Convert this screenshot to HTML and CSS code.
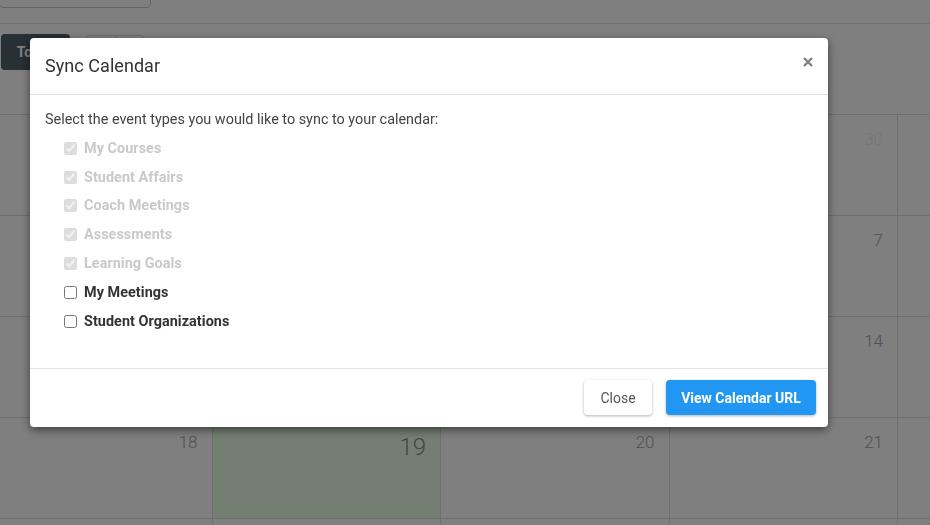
FILE: index.html
```html
<!DOCTYPE html>
<html lang="en">
<head>
<meta charset="utf-8">
<title>Calendar</title>
<link rel="stylesheet" href="styles.css">
</head>
<body>
<div class="page">
  <div class="topbar"><div class="search"></div></div>
  <div class="toolbar">
    <button class="today-btn">Today</button>
    <div class="view-group"><span class="seg"></span><span class="seg"></span></div>
  </div>
  <div class="grid">
    <div class="cell"><span class="num other">27</span></div>
    <div class="cell"><span class="num other">28</span></div>
    <div class="cell"><span class="num other">29</span></div>
    <div class="cell"><span class="num other">30</span></div>
    <div class="cell"></div>
    <div class="cell"><span class="num">4</span></div>
    <div class="cell"><span class="num">5</span></div>
    <div class="cell"><span class="num">6</span></div>
    <div class="cell"><span class="num">7</span></div>
    <div class="cell"></div>
    <div class="cell"><span class="num">11</span></div>
    <div class="cell"><span class="num">12</span></div>
    <div class="cell"><span class="num">13</span></div>
    <div class="cell"><span class="num">14</span></div>
    <div class="cell"></div>
    <div class="cell"><span class="num">18</span></div>
    <div class="cell today"><span class="num big">19</span></div>
    <div class="cell"><span class="num">20</span></div>
    <div class="cell"><span class="num">21</span></div>
    <div class="cell"></div>
    <div class="cell"></div>
    <div class="cell"></div>
    <div class="cell"></div>
    <div class="cell"></div>
    <div class="cell"></div>
  </div>
</div>

<div class="backdrop"></div>

<div class="modal" role="dialog" aria-labelledby="sync-title">
  <div class="modal-header">
    <h4 class="modal-title" id="sync-title">Sync Calendar</h4>
    <button class="close" aria-label="Close">
      <svg width="10" height="10" viewBox="0 0 10 10"><path d="M1 1 L9 9 M9 1 L1 9" stroke="#828282" stroke-width="2.4" stroke-linecap="butt"/></svg>
    </button>
  </div>
  <div class="modal-body">
    <p class="intro">Select the event types you would like to sync to your calendar:</p>
    <ul class="options">
      <li><label class="opt disabled"><input type="checkbox" checked disabled><span>My Courses</span></label></li>
      <li><label class="opt disabled"><input type="checkbox" checked disabled><span>Student Affairs</span></label></li>
      <li><label class="opt disabled"><input type="checkbox" checked disabled><span>Coach Meetings</span></label></li>
      <li><label class="opt disabled"><input type="checkbox" checked disabled><span>Assessments</span></label></li>
      <li><label class="opt disabled"><input type="checkbox" checked disabled><span>Learning Goals</span></label></li>
      <li><label class="opt"><input type="checkbox"><span>My Meetings</span></label></li>
      <li><label class="opt"><input type="checkbox"><span>Student Organizations</span></label></li>
    </ul>
  </div>
  <div class="modal-footer">
    <button class="btn btn-default">Close</button>
    <button class="btn btn-primary">View Calendar URL</button>
  </div>
</div>
</body>
</html>
```
FILE: styles.css
```css
* { box-sizing: border-box; }
html, body {
  margin: 0;
  width: 930px;
  height: 525px;
  overflow: hidden;
  background: #fff;
  font-family: Roboto, "Liberation Sans", sans-serif;
}
.page { width: 930px; height: 525px; overflow: hidden; }

.topbar {
  height: 24px;
  border-bottom: 1px solid #e0e0e0;
  display: flex;
  align-items: flex-end;
  padding-bottom: 15px;
}
.search {
  flex: none;
  width: 152px;
  height: 30px;
  margin-left: -1px;
  border: 1px solid #c8c8c8;
  border-radius: 4px;
}

.toolbar {
  height: 90px;
  display: flex;
  align-items: flex-start;
  padding-top: 10px;
}
.today-btn {
  margin-left: 1px;
  width: 69px;
  height: 36px;
  border: 0;
  border-radius: 4px;
  background: #4c606a;
  color: #fff;
  font-family: inherit;
  font-weight: 700;
  font-size: 14px;
}
.view-group {
  margin-left: 16px;
  margin-top: 1px;
  width: 59px;
  height: 34px;
  border: 1px solid #dcdcdc;
  border-radius: 4px;
  display: flex;
}
.view-group .seg { flex: 1; }
.view-group .seg + .seg { border-left: 1px solid #dcdcdc; }

.grid {
  margin-left: -16px;
  display: grid;
  grid-template-columns: repeat(5, 228.5px);
  width: 1142.5px;
}
.cell {
  height: 101px;
  border-top: 1px solid #dddddd;
  border-right: 1px solid #dddddd;
  padding: 14px 14px 0 0;
  text-align: right;
}
.cell.today { background: #e7ffe3; }
.num {
  font-size: 17px;
  line-height: 20px;
  font-weight: 300;
  color: #a2a2a2;
}
.num.other { color: #ececec; }
.num.big {
  font-size: 24px;
  line-height: 30px;
  color: #829480;
}

.backdrop {
  position: fixed;
  inset: 0;
  background: rgba(0, 0, 0, 0.5);
}

.modal {
  position: absolute;
  top: 38px;
  left: 30px;
  width: 798px;
  background: #fff;
  border-radius: 4px;
  box-shadow: 0 3px 9px rgba(0, 0, 0, 0.5);
  color: #333;
}
.modal-header {
  height: 57px;
  padding: 0 15px;
  border-bottom: 1px solid #e2e2e2;
  display: flex;
  align-items: center;
  justify-content: space-between;
}
.modal-title {
  margin: 0;
  font-size: 18px;
  font-weight: 400;
  line-height: 26px;
  color: #333;
  letter-spacing: 0.05px;
}
.close {
  border: 0;
  background: none;
  padding: 0;
  width: 10px;
  height: 10px;
  margin-right: 0;
  margin-top: -8px;
  display: flex;
}

.modal-body {
  padding: 15px 15px 32px;
  height: 273px;
}
.intro {
  margin: 0 0 4px;
  font-size: 14.4px;
  line-height: 20px;
  color: #444;
}
.options {
  list-style: none;
  margin: 0;
  padding: 0 0 0 19px;
}
.options li { height: 28.8px; display: flex; align-items: center; }
.opt {
  display: flex;
  align-items: center;
  gap: 7px;
  font-size: 14.4px;
  font-weight: 700;
  color: #333;
  letter-spacing: 0.05px;
}
.opt input {
  margin: 0;
  width: 13px;
  height: 13px;
}
.opt.disabled { color: #c9c9c9; }
.opt.disabled input { opacity: 0.75; }

.modal-footer {
  border-top: 1px solid #e5e5e5;
  padding: 11px 12px 12px;
  display: flex;
  justify-content: flex-end;
  gap: 14px;
}
.btn {
  height: 35px;
  border: 0;
  border-radius: 4px;
  font-family: inherit;
  font-size: 14px;
  padding: 0;
  white-space: nowrap;
  box-shadow: 0 1px 3px rgba(0, 0, 0, 0.3);
}
.btn-default {
  width: 68px;
  background: #fff;
  color: #555;
}
.btn-primary {
  width: 150px;
  background: #2196f3;
  color: #fff;
  font-weight: 700;
}
```
